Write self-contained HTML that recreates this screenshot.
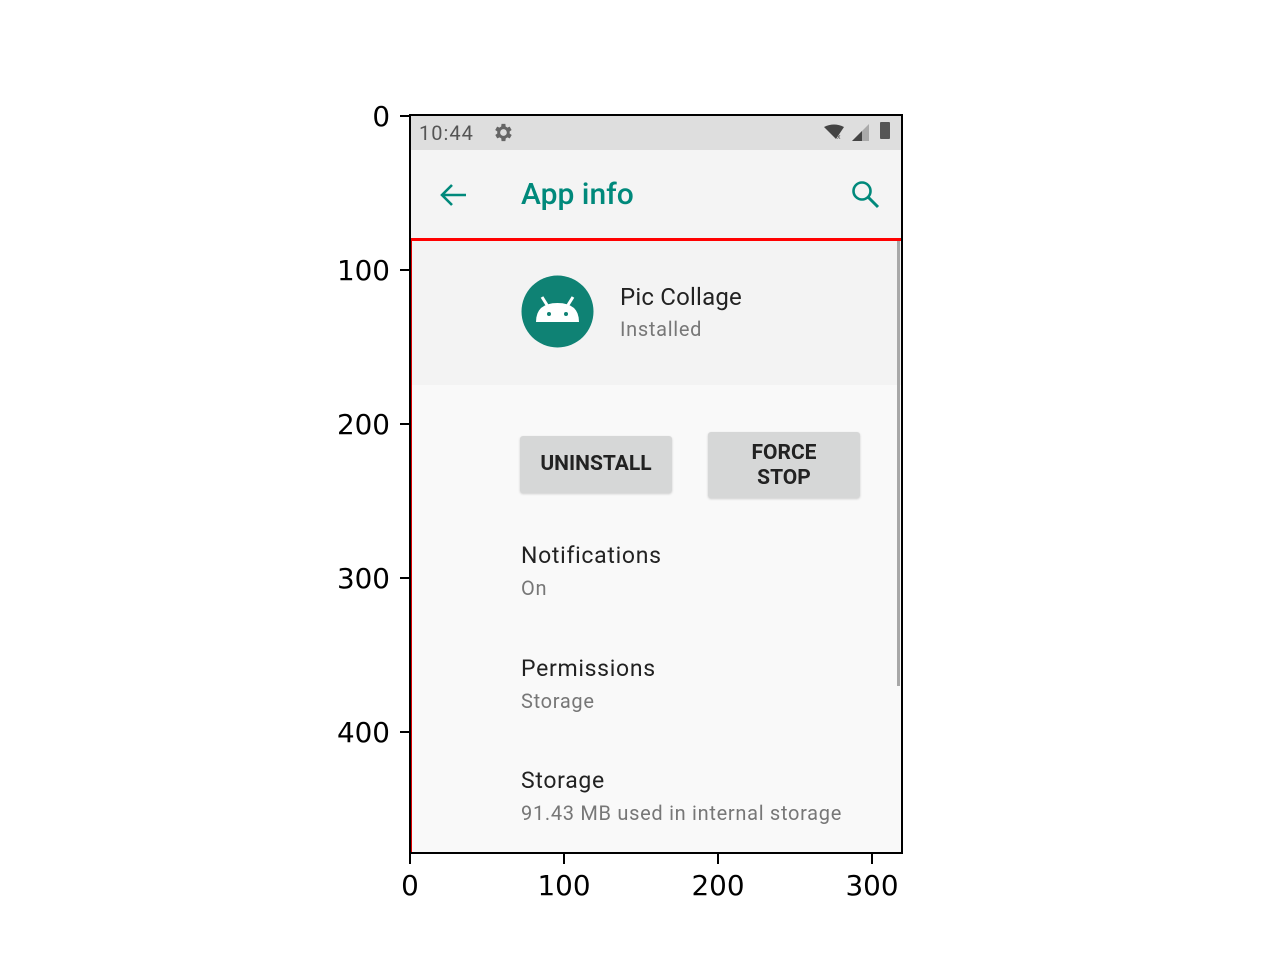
<!DOCTYPE html>
<html><head><meta charset="utf-8"><style>
body{margin:0;width:1280px;height:960px;background:#fff;position:relative;overflow:hidden;font-family:"Liberation Sans",sans-serif}
.a{position:absolute}
.tk{position:absolute;background:#000}
.lbl{position:absolute;font-family:"DejaVu Sans",sans-serif;font-size:27.8px;color:#000;line-height:1}
.t{position:absolute;font-family:"Roboto","Liberation Sans",sans-serif;white-space:nowrap}
.ls{letter-spacing:0.7px}
</style></head><body>
<div class="a" style="left:411px;top:116px;width:490px;height:737px;background:#f9f9f9"></div>
<div class="a" style="left:411px;top:116px;width:490px;height:34px;background:#dedede"></div>
<div class="a" style="left:411px;top:150px;width:490px;height:89px;background:#f4f4f4"></div>
<div class="a" style="left:411px;top:241px;width:490px;height:144px;background:#f3f3f3"></div>
<div class="a" style="left:410px;top:238px;width:492px;height:3px;background:#f00"></div>
<div class="a" style="left:411px;top:241px;width:1px;height:612px;background:#d00"></div>
<div class="a" style="left:897px;top:241px;width:3px;height:445px;background:#a8a8a8"></div>

<div class="t" style="left:419px;top:121px;font-size:20px;color:#555;letter-spacing:1px">10:44</div>
<svg class="a" style="left:491px;top:121px" width="23" height="23" viewBox="0 0 24 24"><path fill="#666" d="M19.4 13a7.5 7.5 0 000-2l2.1-1.6-2-3.5-2.5 1a7 7 0 00-1.7-1L15 3h-4l-.4 2.9a7 7 0 00-1.7 1l-2.5-1-2 3.5L6.6 11a7.5 7.5 0 000 2l-2.1 1.6 2 3.5 2.5-1a7 7 0 001.7 1L11 21h4l.4-2.9a7 7 0 001.7-1l2.5 1 2-3.5zM13 15.5a3.5 3.5 0 110-7 3.5 3.5 0 010 7z"/></svg>
<svg class="a" style="left:822px;top:122px" width="50" height="22" viewBox="0 0 50 22"><path d="M2 5 Q12 0 22 5 L14 17Z" fill="#444"/><text x="15" y="17" font-size="7" fill="#555">x</text><path d="M30 19 L47 2 V19Z" fill="#aaa"/><path d="M30 19 L40 9 V19Z" fill="#444"/></svg>
<div class="a" style="left:880px;top:122px;width:10px;height:17px;background:#555;border-radius:1px"></div>

<svg class="a" style="left:438px;top:180px" width="32" height="30" viewBox="0 0 32 30"><path d="M28 15H5M14 5L4 15l10 10" stroke="#00897b" stroke-width="2.6" fill="none"/></svg>
<div class="t" style="left:521px;top:177px;font-size:30px;color:#00897b;font-weight:500">App info</div>
<svg class="a" style="left:849px;top:178px" width="34" height="34" viewBox="0 0 34 34"><circle cx="13" cy="13" r="8.5" stroke="#00897b" stroke-width="2.6" fill="none"/><path d="M19 19L29 29" stroke="#00897b" stroke-width="3"/></svg>

<svg class="a" style="left:521px;top:275px" width="73" height="73" viewBox="0 0 73 73"><circle cx="36.5" cy="36.5" r="36" fill="#0f8274"/><path d="M15 47 Q15 28 36.5 28 Q58 28 58 47Z" fill="#fff"/><path d="M21 22l5 8M52 22l-5 8" stroke="#fff" stroke-width="3"/><circle cx="28" cy="39" r="2" fill="#0f8274"/><circle cx="45" cy="39" r="2" fill="#0f8274"/></svg>
<div class="t ls" style="left:620px;top:283px;font-size:24px;color:#222;letter-spacing:0.2px">Pic Collage</div>
<div class="t ls" style="left:620px;top:317px;font-size:20px;color:#777">Installed</div>

<div class="a" style="left:520px;top:436px;width:152px;height:57px;background:#d6d7d7;border-radius:3px;box-shadow:0 1px 2px #ccc"></div>
<div class="t" style="left:520px;top:452px;width:152px;text-align:center;font-size:21px;font-weight:bold;color:#222">UNINSTALL</div>
<div class="a" style="left:708px;top:432px;width:152px;height:66px;background:#d6d7d7;border-radius:3px;box-shadow:0 1px 2px #ccc"></div>
<div class="t" style="left:708px;top:441px;width:152px;text-align:center;font-size:21px;font-weight:bold;color:#222;line-height:25px">FORCE<br>STOP</div>

<div class="t ls" style="left:521px;top:542px;font-size:23px;color:#222">Notifications</div>
<div class="t ls" style="left:521px;top:576px;font-size:20px;color:#777">On</div>
<div class="t ls" style="left:521px;top:655px;font-size:23px;color:#222">Permissions</div>
<div class="t ls" style="left:521px;top:689px;font-size:20px;color:#777">Storage</div>
<div class="t ls" style="left:521px;top:767px;font-size:23px;color:#222">Storage</div>
<div class="t ls" style="left:521px;top:801px;font-size:20px;color:#777">91.43 MB used in internal storage</div>

<div class="a" style="left:409px;top:114px;width:490px;height:736px;border:2px solid #000"></div>
<div class="tk" style="left:400px;top:115px;width:10px;height:2px"></div>
<div class="tk" style="left:400px;top:269px;width:10px;height:2px"></div>
<div class="tk" style="left:400px;top:423px;width:10px;height:2px"></div>
<div class="tk" style="left:400px;top:577px;width:10px;height:2px"></div>
<div class="tk" style="left:400px;top:731px;width:10px;height:2px"></div>
<div class="lbl" style="right:890px;top:103px">0</div>
<div class="lbl" style="right:890px;top:257px">100</div>
<div class="lbl" style="right:890px;top:411px">200</div>
<div class="lbl" style="right:890px;top:565px">300</div>
<div class="lbl" style="right:890px;top:719px">400</div>
<div class="tk" style="left:409px;top:854px;width:2px;height:10px"></div>
<div class="tk" style="left:563px;top:854px;width:2px;height:10px"></div>
<div class="tk" style="left:717px;top:854px;width:2px;height:10px"></div>
<div class="tk" style="left:871px;top:854px;width:2px;height:10px"></div>
<div class="lbl" style="left:380px;width:60px;text-align:center;top:872px">0</div>
<div class="lbl" style="left:524px;width:80px;text-align:center;top:872px">100</div>
<div class="lbl" style="left:678px;width:80px;text-align:center;top:872px">200</div>
<div class="lbl" style="left:832px;width:80px;text-align:center;top:872px">300</div>
</body></html>
